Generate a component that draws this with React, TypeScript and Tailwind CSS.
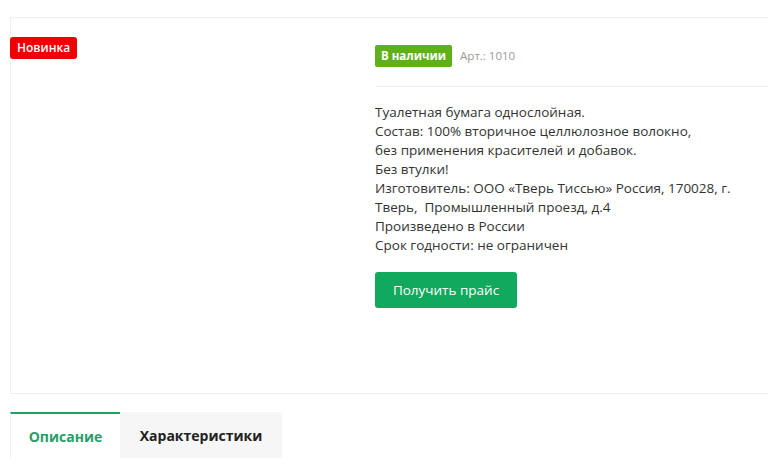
import React from "react";

const lines = [
  "Туалетная бумага однослойная.",
  "Состав: 100% вторичное целлюлозное волокно,",
  "без применения красителей и добавок.",
  "Без втулки!",
  "Изготовитель: ООО «Тверь Тиссью» Россия, 170028, г.",
  "Тверь,  Промышленный проезд, д.4",
  "Произведено в России",
  "Срок годности: не ограничен",
];

export default function App() {
  return (
    <div
      className="w-[768px] h-[465px] overflow-hidden bg-white text-[#333]"
      style={{ fontFamily: "'Open Sans', 'Liberation Sans', sans-serif" }}
    >
      <div className="ml-[10px] mt-[17px] w-[820px] border border-[#f0f0f0] flex h-[377px]">
        <div className="w-[364px] pt-[19px]">
          <span className="block w-fit -ml-px h-[22px] px-[7px] rounded-[3px] bg-[#f00000] text-white text-[12px] leading-[22px] font-semibold">
            Новинка
          </span>
        </div>
        <div className="flex-1 pt-[27px]">
          <div className="flex items-center gap-[8px]">
            <span className="inline-block h-[22px] px-[6px] rounded-[2px] bg-[#5fb11a] text-white text-[11.5px] leading-[22px] font-bold">
              В наличии
            </span>
            <span className="text-[11.5px] text-[#999]">Арт.: 1010</span>
          </div>
          <div className="mt-[19px] border-t border-[#f0f0f0]" />
          <div className="mt-[16px] text-[13.5px] leading-[19px] text-[#333] whitespace-pre">
            {lines.map((l, i) => (
              <div key={i}>{l}</div>
            ))}
          </div>
          <button className="mt-[17px] h-[36px] w-[142px] rounded-[3px] bg-[#10a95d] text-white text-[13.5px] font-medium">
            Получить прайс
          </button>
        </div>
      </div>
      <div className="ml-[10px] mt-[18px] flex h-[46px]">
        <div className="w-[110px] border-t-2 border-[#1ba366] border-l border-l-[#f0f0f0] flex items-center justify-center text-[14px] font-bold text-[#25a06a]">
          Описание
        </div>
        <div className="w-[162px] bg-[#f6f6f6] flex items-center justify-center text-[14px] font-bold text-[#222]">
          Характеристики
        </div>
      </div>
    </div>
  );
}
